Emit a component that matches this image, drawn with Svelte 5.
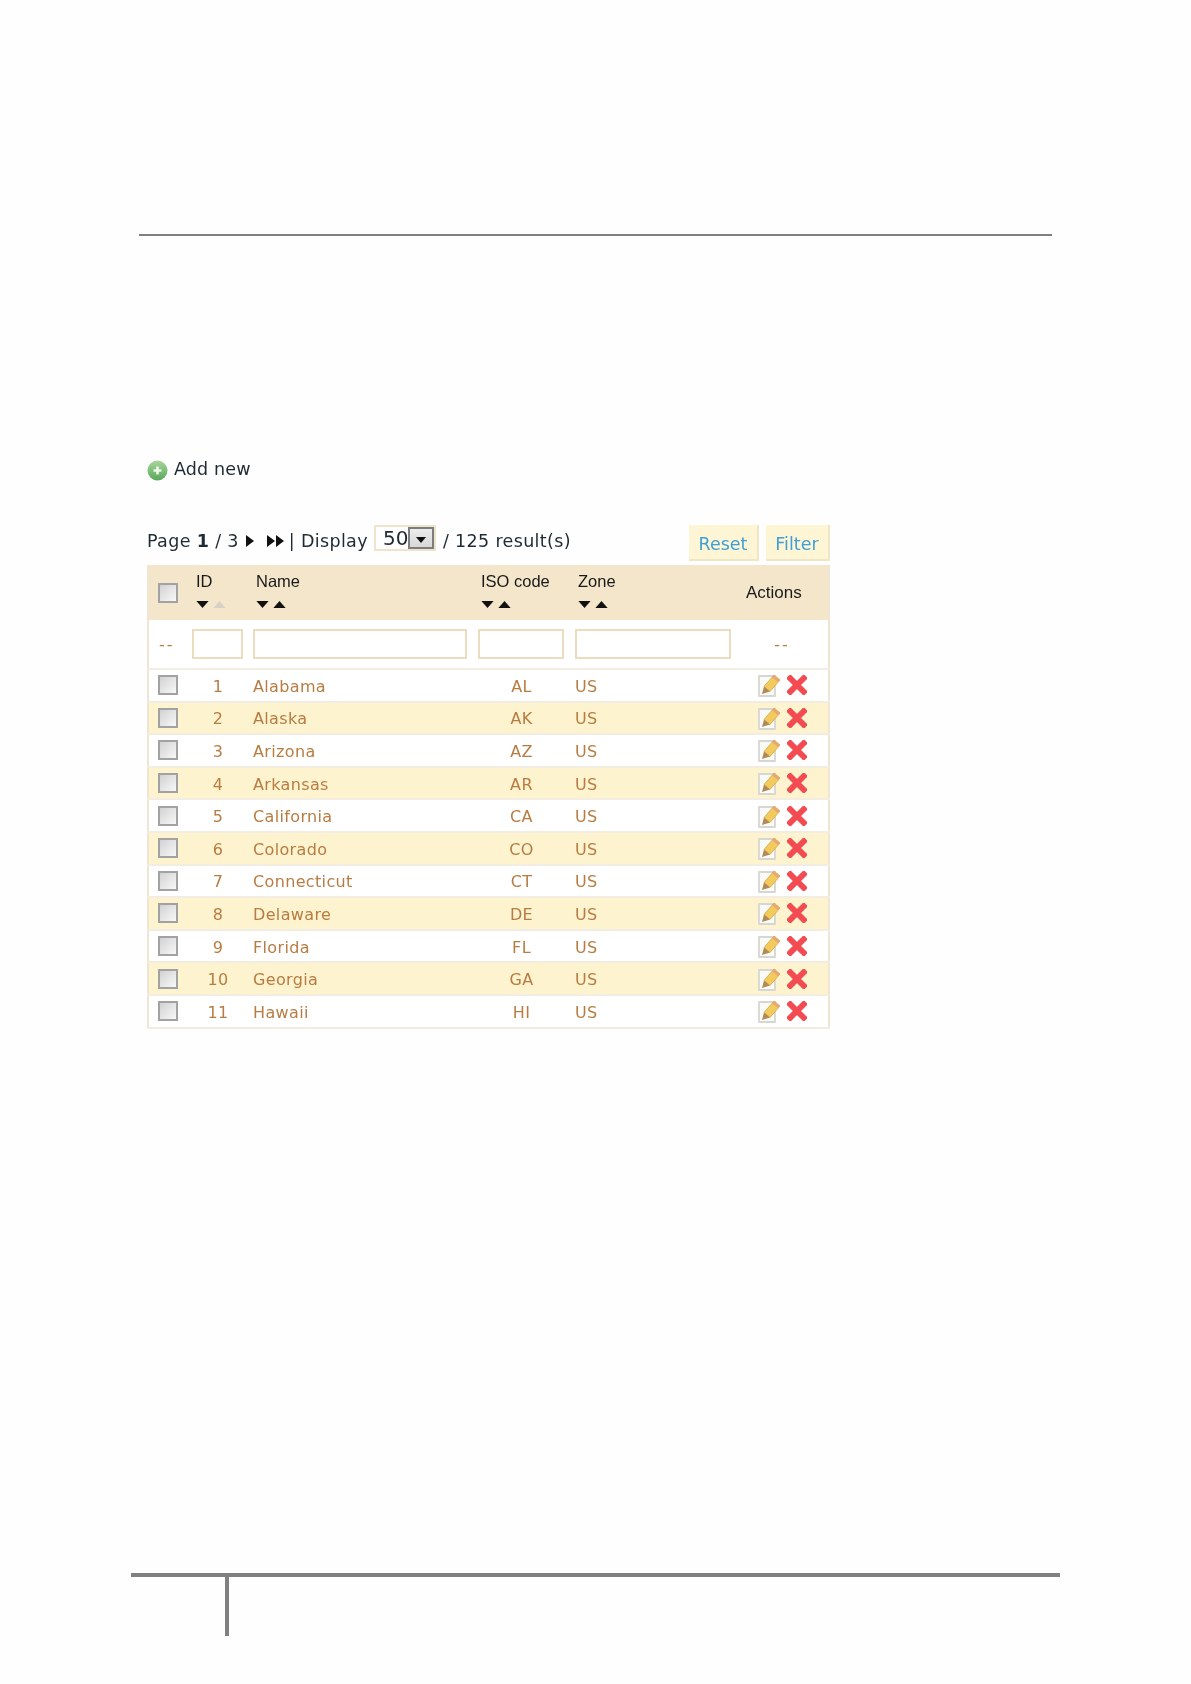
<script lang="ts">
    const states = [
        [1, "Alabama", "AL"], [2, "Alaska", "AK"], [3, "Arizona", "AZ"], [4, "Arkansas", "AR"],
        [5, "California", "CA"], [6, "Colorado", "CO"], [7, "Connecticut", "CT"], [8, "Delaware", "DE"],
        [9, "Florida", "FL"], [10, "Georgia", "GA"], [11, "Hawaii", "HI"]
    ];
    const columns = [
        { label: "ID", upOff: true },
        { label: "Name", upOff: false },
        { label: "ISO code", upOff: false },
        { label: "Zone", upOff: false }
    ];
</script>

{#snippet checkbox()}
    <span class="check"></span>
{/snippet}

<div class="page">
    <div class="top-rule"></div>

    <main>
        <a class="add-new">
            <svg width="21" height="21" viewBox="0 0 21 21">
                <defs>
                    <linearGradient id="green" x1="0" y1="0" x2="0" y2="1">
                        <stop offset="0" stop-color="#a9d69c" />
                        <stop offset="1" stop-color="#58a85a" />
                    </linearGradient>
                </defs>
                <circle cx="10.5" cy="10.5" r="10" fill="url(#green)" />
                <path d="M10.5 6.5v8M6.5 10.5h8" stroke="#eef8ea" stroke-width="2.6" />
            </svg>
            <span>Add new</span>
        </a>

        <div class="toolbar">
            <div class="pager">
                <span>Page <b>1</b> / 3</span>
                <svg class="next" width="9" height="14" viewBox="0 0 9 14"><path d="M0 1l8 6-8 6z" /></svg>
                <svg class="last" width="17" height="14" viewBox="0 0 17 14"><path d="M0 1l8 6-8 6zM9 1l8 6-8 6z" /></svg>
                <span>| Display</span>
                <span class="select">
                    <span class="value">50</span>
                    <span class="drop"><svg width="10" height="6" viewBox="0 0 12 7"><path d="M0 0h12l-6 7z" /></svg></span>
                </span>
                <span>/ 125 result(s)</span>
            </div>
            <div class="buttons">
                <button class="reset">Reset</button>
                <button class="filter">Filter</button>
            </div>
        </div>

        <table>
            <colgroup>
                <col style="width:41px" /><col style="width:60px" /><col style="width:225px" />
                <col style="width:97px" /><col style="width:165px" /><col />
            </colgroup>
            <thead>
                <tr>
                    <th class="c-check">{@render checkbox()}</th>
                    {#each columns as col}
                        <th class="sortable">
                            <div>{col.label}</div>
                            <div class="arrows">
                                <svg width="13" height="7" viewBox="0 0 14 8"><path d="M0 0h14l-7 8z" /></svg>
                                <svg class:off={col.upOff} width="13" height="7" viewBox="0 0 14 8"><path d="M0 8h14L7 0z" /></svg>
                            </div>
                        </th>
                    {/each}
                    <th class="actions-head">Actions</th>
                </tr>
            </thead>
            <tbody>
                <tr class="filters">
                    <td class="dash left">--</td>
                    <td><span class="field id"></span></td>
                    <td><span class="field name"></span></td>
                    <td><span class="field iso"></span></td>
                    <td><span class="field zone"></span></td>
                    <td class="dash">--</td>
                </tr>
                {#each states as [id, name, iso], i}
                    <tr class="row" class:alt={i % 2 === 1}>
                        <td class="c-check">{@render checkbox()}</td>
                        <td class="center">{id}</td>
                        <td class="state">{name}</td>
                        <td class="center">{iso}</td>
                        <td class="country">US</td>
                        <td class="icons">
                            <svg width="24" height="24" viewBox="0 0 24 24">
                                <path d="M2 3h16v20H2z" fill="#fafaf7" stroke="#d6d6d2" stroke-width="1.8" stroke-linejoin="round" />
                                <path d="M7 13.500L17 2l6 5L13 18.500z" fill="#f2cb5c" stroke="#d4a846" stroke-width="0.8" />
                                <path d="M5 21l2-7.500 6 5z" fill="#b08a58" />
                                <path d="M17 2l6 5-2 2.300-6-5z" fill="#e6a878" />
                            </svg>
                            <svg width="20" height="20" viewBox="0 0 20 20">
                                <path d="M2.500 2.500l15 15M17.500 2.500l-15 15" stroke="#f34b52" stroke-width="6.500" stroke-linecap="square" transform="translate(10 10) scale(.9) translate(-10 -10)" />
                            </svg>
                        </td>
                    </tr>
                {/each}
            </tbody>
        </table>
    </main>

    <footer>
        <div class="foot-tick"></div>
    </footer>
</div>

<style>
    :global(body) {
        background: #fefefe;
    }
    .page {
        height: 1684px;
        display: flex;
        flex-direction: column;
        font-family: "DejaVu Sans", Verdana, sans-serif;
        color: #222;
        overflow: hidden;
    }
    .top-rule {
        height: 2px;
        margin: 234px 139px 0 139px;
        background: #808080;
        width: 913px;
    }
    main {
        padding: 224px 0 0 147px;
        width: 683px;
        filter: blur(0.5px);
        flex: 1;
        box-sizing: content-box;
    }
    .add-new {
        display: flex;
        align-items: center;
        gap: 6px;
        height: 21px;
        font-size: 17.500px;
        letter-spacing: 0.15px;
        color: #1f2a33;
    }
    .add-new span {
        position: relative;
        top: -2px;
    }
    .toolbar {
        display: flex;
        justify-content: space-between;
        margin-top: 44px;
        height: 40px;
    }
    .pager {
        display: flex;
        align-items: center;
        height: 32px;
        gap: 6px;
        font-size: 17.500px;
        letter-spacing: 0.35px;
        white-space: nowrap;
        color: #1f2a33;
    }
    .pager svg {
        fill: #111;
    }
    .next {
        margin-left: 1px;
    }
    .last {
        margin-left: 6px;
        margin-right: -1px;
    }
    .select {
        display: flex;
        align-items: center;
        justify-content: space-between;
        box-sizing: border-box;
        width: 62px;
        height: 26px;
        margin: -6px 1px 0 0;
        border: 2px solid #efe3cc;
        padding-left: 7px;
        font-size: 20px;
        letter-spacing: 0;
    }
    .drop {
        display: flex;
        align-items: center;
        justify-content: center;
        box-sizing: border-box;
        width: 26px;
        height: 22px;
        background: linear-gradient(#ececec, #d8d8d8);
        border: 2px solid #7d7d7d;
    }
    .drop svg {
        fill: #111;
        margin-top: 3px;
    }
    .buttons {
        display: flex;
        gap: 7px;
        height: 36px;
    }
    button {
        border: 0;
        border-right: 2px solid #efe6c8;
        border-bottom: 2px solid #efe6c8;
        background: #fdf5d3;
        color: #3f9fd8;
        font: 17.500px "DejaVu Sans", Verdana, sans-serif;
        padding: 3px 0 0;
    }
    .reset {
        width: 70px;
    }
    .filter {
        width: 64px;
    }
    table {
        width: 683px;
        table-layout: fixed;
        border-collapse: collapse;
        border-left: 2px solid #efe5d2;
        border-right: 2px solid #efe5d2;
        border-bottom: 2px solid #efe8d8;
        color: #b87c42;
        font-size: 16px;
        letter-spacing: 0.35px;
    }
    thead tr {
        height: 55px;
        background: #f3e6cb;
        color: #1a1a1a;
        font: 16.500px "Liberation Sans", Arial, sans-serif;
        letter-spacing: 0;
    }
    th {
        padding: 0;
        font-weight: normal;
        text-align: left;
    }
    .sortable {
        padding-left: 7px;
        vertical-align: top;
        padding-top: 7px;
    }
    .arrows {
        display: flex;
        gap: 4px;
        margin-top: 10px;
    }
    .arrows svg {
        fill: #111;
    }
    .arrows svg.off {
        fill: #d6d2c8;
    }
    .actions-head {
        padding-left: 10px;
        font-size: 17px;
    }
    .c-check {
        padding: 0 0 0 9px;
    }
    .check {
        display: block;
        box-sizing: border-box;
        width: 20px;
        height: 20px;
        border: 2px solid #a2a2a2;
        background: linear-gradient(135deg, #d2d2d2, #f8f8f8);
    }
    .filters {
        height: 49px;
        background: #fff;
        border-bottom: 2px solid #f3ece0;
    }
    .filters td {
        padding: 0 0 0 4px;
    }
    .dash {
        text-align: center;
        letter-spacing: 2px;
    }
    .filters td.dash {
        padding: 0;
    }
    .filters td.dash.left {
        text-align: left;
        padding-left: 10px;
    }
    .field {
        display: block;
        box-sizing: border-box;
        height: 30px;
        border: 2px solid #ecdcc0;
        background: #fff;
    }
    .field.id { width: 51px; margin-left: -1px; }
    .field.name { width: 214px; }
    .field.iso { width: 86px; }
    .field.zone { width: 156px; }
    .row {
        height: 32.600px;
        background: #fff;
        border-bottom: 2px solid #f3ece0;
    }
    .row.alt {
        background: #fdf3ce;
    }
    .row td {
        padding-top: 2px;
        padding-bottom: 0;
    }
    .row td.c-check, .row td.icons {
        padding-top: 0;
    }
    .center {
        text-align: center;
        padding-left: 0;
        padding-right: 2px;
    }
    .state {
        padding-left: 4px;
    }
    .country {
        padding-left: 4px;
    }
    .icons {
        padding-left: 21px;
        white-space: nowrap;
    }
    .icons svg {
        display: inline-block;
        vertical-align: middle;
        margin-right: 1px;
    }
    footer {
        height: 107px;
        margin-left: 131px;
        width: 929px;
        border-top: 4px solid #808080;
    }
    .foot-tick {
        width: 4px;
        height: 59px;
        margin-left: 94px;
        background: #808080;
    }
</style>
